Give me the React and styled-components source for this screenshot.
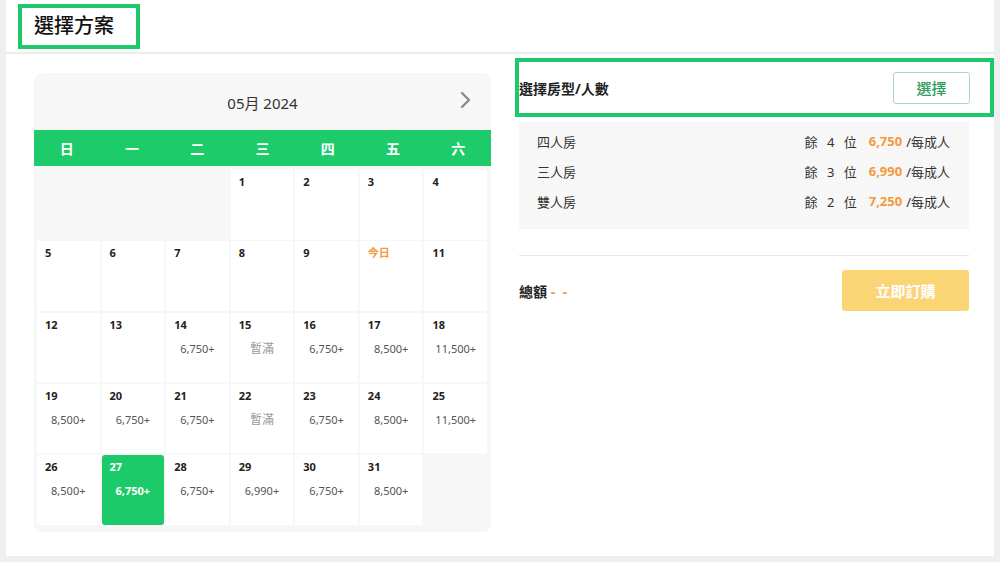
import React from "react";
import styled, { createGlobalStyle } from "styled-components";

const GlobalStyle = createGlobalStyle`
  html, body {
    margin: 0;
    padding: 0;
    background: #eef0ef;
    font-family: "Noto Sans", "Noto Sans CJK TC", sans-serif;
    color: #222;
  }
`;

const Panel = styled.div`
  margin: 0 6px;
  height: 556px;
  background: #fff;
  box-sizing: border-box;
`;

const Header = styled.div`
  height: 54px;
  box-sizing: border-box;
  padding: 4px 0 0 12px;
  border-bottom: 2px solid #eceeed;
`;

const Title = styled.h2`
  display: inline-flex;
  align-items: center;
  box-sizing: border-box;
  height: 45px;
  margin: 0;
  padding: 0 22px 4px 12px;
  border: 4px solid #1fc86a;
  font-size: 20px;
  font-weight: 500;
  color: #111;
`;

const Body = styled.div`
  display: flex;
  gap: 28px;
  padding: 4px 25px 0 28px;
`;

const CalendarCard = styled.div`
  width: 457px;
  margin-top: 15px;
  background: #f7f7f7;
  border-radius: 8px;
  overflow: hidden;
  padding-bottom: 7px;
`;

const MonthBar = styled.div`
  position: relative;
  height: 57px;
  display: flex;
  align-items: center;
  justify-content: center;
  font-size: 15px;
  color: #333;
  padding-top: 2px;
  box-sizing: border-box;
`;

const NextButton = styled.span`
  position: absolute;
  right: 18px;
  top: 17px;
  display: flex;
`;

const WeekBar = styled.div`
  display: grid;
  grid-template-columns: repeat(7, 1fr);
  height: 36px;
  align-items: center;
  background: #1ecb6b;
  color: #fff;
  font-size: 14px;
  font-weight: 700;
  text-align: center;
`;

const DayGrid = styled.div`
  display: grid;
  grid-template-columns: repeat(7, 1fr);
  grid-auto-rows: 69.5px;
  gap: 1.8px 2px;
  padding: 4px 4px 0 3px;
`;

const DayCell = styled.div`
  background: ${(p) => (p.$empty ? "transparent" : p.$selected ? "#1dca6a" : "#fff")};
  border-radius: ${(p) => (p.$selected ? "3px" : "0")};
  padding: 5px 8px;
  box-sizing: border-box;
  display: flex;
  flex-direction: column;
`;

const DayNum = styled.span`
  font-size: 11px;
  font-weight: 700;
  line-height: 14px;
  color: ${(p) => (p.$today ? "#f39a3c" : p.$selected ? "#fff" : "#222")};
`;

const Price = styled.span`
  margin-top: 9px;
  text-align: center;
  font-size: ${(p) => (p.$full ? "12px" : "11px")};
  line-height: 16px;
  color: ${(p) => (p.$selected ? "#fff" : p.$full ? "#999" : "#555")};
  font-weight: ${(p) => (p.$selected ? 700 : 400)};
`;

const Side = styled.div`
  flex: 1;
  display: flex;
  flex-direction: column;
`;

const RoomHeader = styled.div`
  height: 59px;
  box-sizing: border-box;
  margin: 0 -25px 0 -4px;
  border: 4px solid #1fc86a;
  padding-right: 20px;
  display: flex;
  align-items: center;
  justify-content: space-between;
`;

const RoomTitle = styled.span`
  font-size: 14px;
  font-weight: 700;
  color: #222;
`;

const OutlineButton = styled.button`
  width: 77px;
  height: 32px;
  background: #fff;
  border: 1px solid #a9d9bd;
  border-radius: 3px;
  color: #2e9a5e;
  font-family: inherit;
  font-size: 15px;
  font-weight: 500;
  padding: 0;
`;

const RoomList = styled.div`
  margin-top: 5px;
  height: 107px;
  box-sizing: border-box;
  background: #f7f7f7;
  padding: 4px 19px 0 18px;
`;

const RoomRow = styled.div`
  height: 30px;
  display: flex;
  align-items: center;
  justify-content: space-between;
  font-size: 13px;
  color: #333;
`;

const Remain = styled.span`
  display: flex;
  align-items: center;
  gap: 4px;
`;

const Spaced = styled.span`
  letter-spacing: 2px;
  word-spacing: 2px;
  margin-right: 6px;
`;

const Orange = styled.span`
  color: #f39a3c;
  font-weight: 700;
`;

const Dashes = styled(Orange)`
  letter-spacing: 2px;
`;

const Divider = styled.div`
  margin-top: 26px;
  height: 1px;
  background: #e6e8e8;
`;

const TotalRow = styled.div`
  margin-top: 14px;
  display: flex;
  align-items: center;
  justify-content: space-between;
`;

const Total = styled.span`
  font-size: 14px;
  font-weight: 700;
  color: #222;
`;

const BuyButton = styled.button`
  width: 127px;
  height: 41px;
  border: none;
  border-radius: 3px;
  background: #fbd476;
  color: #fff;
  font-family: inherit;
  font-size: 15px;
  font-weight: 700;
  padding: 0;
`;

const weekdays = ["日", "一", "二", "三", "四", "五", "六"];

const prices = {
  14: "6,750+", 15: "暫滿", 16: "6,750+", 17: "8,500+", 18: "11,500+",
  19: "8,500+", 20: "6,750+", 21: "6,750+", 22: "暫滿", 23: "6,750+", 24: "8,500+", 25: "11,500+",
  26: "8,500+", 27: "6,750+", 28: "6,750+", 29: "6,990+", 30: "6,750+", 31: "8,500+",
};

const rooms = [
  { name: "四人房", left: 4, price: "6,750" },
  { name: "三人房", left: 3, price: "6,990" },
  { name: "雙人房", left: 2, price: "7,250" },
];

const cells = [
  ...Array(3).fill(null),
  ...Array.from({ length: 31 }, (_, i) => i + 1),
  null,
];

export default function App() {
  return (
    <>
      <GlobalStyle />
      <Panel>
        <Header>
          <Title>選擇方案</Title>
        </Header>
        <Body>
          <CalendarCard>
            <MonthBar>
              05月 2024
              <NextButton>
                <svg width="14" height="20" viewBox="0 0 14 20" fill="none">
                  <path d="M3 3l7 7-7 7" stroke="#8a8a8a" strokeWidth="2.4" strokeLinecap="round" strokeLinejoin="round" />
                </svg>
              </NextButton>
            </MonthBar>
            <WeekBar>
              {weekdays.map((w) => (
                <span key={w}>{w}</span>
              ))}
            </WeekBar>
            <DayGrid>
              {cells.map((d, i) => {
                if (d === null) return <DayCell key={i} $empty />;
                const selected = d === 27;
                const today = d === 10;
                const price = prices[d];
                return (
                  <DayCell key={i} $selected={selected}>
                    <DayNum $today={today} $selected={selected}>
                      {today ? "今日" : d}
                    </DayNum>
                    {price && (
                      <Price $full={price === "暫滿"} $selected={selected}>
                        {price}
                      </Price>
                    )}
                  </DayCell>
                );
              })}
            </DayGrid>
          </CalendarCard>
          <Side>
            <RoomHeader>
              <RoomTitle>選擇房型/人數</RoomTitle>
              <OutlineButton>選擇</OutlineButton>
            </RoomHeader>
            <RoomList>
              {rooms.map((r) => (
                <RoomRow key={r.name}>
                  <span>{r.name}</span>
                  <Remain>
                    <Spaced>餘 {r.left} 位</Spaced>
                    <Orange>{r.price}</Orange>
                    <span>/每成人</span>
                  </Remain>
                </RoomRow>
              ))}
            </RoomList>
            <Divider />
            <TotalRow>
              <Total>
                總額 <Dashes>- -</Dashes>
              </Total>
              <BuyButton>立即訂購</BuyButton>
            </TotalRow>
          </Side>
        </Body>
      </Panel>
    </>
  );
}
